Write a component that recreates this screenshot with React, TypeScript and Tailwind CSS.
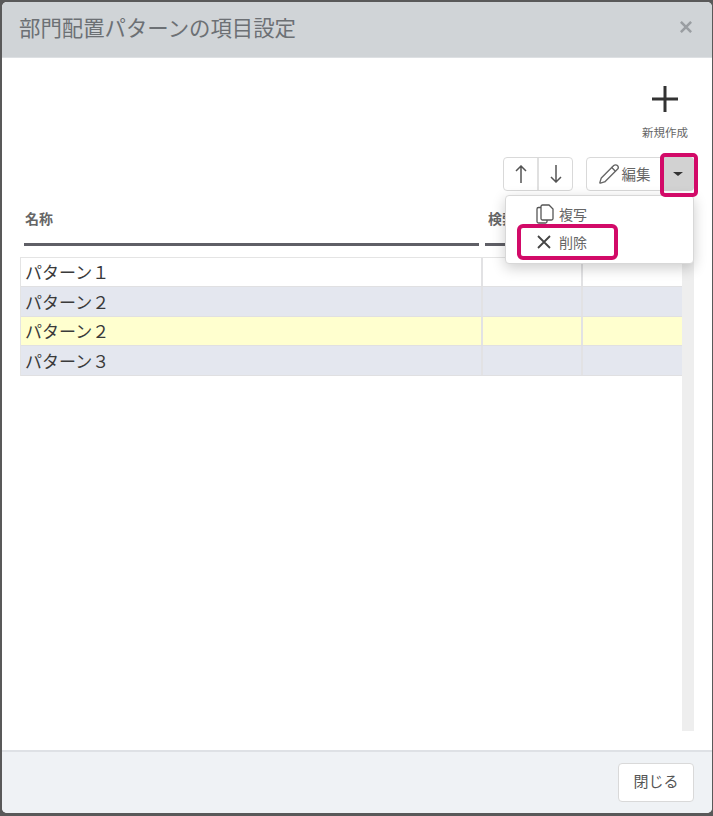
import { Pencil } from "lucide-react";

const font = { fontFamily: '"Noto Sans CJK JP", "Noto Sans", sans-serif' };

const rows = [
  { name: "パターン１", bg: "bg-white", h: "h-[29px]" },
  { name: "パターン２", bg: "bg-[#e4e7ef]", h: "h-[30px]" },
  { name: "パターン２", bg: "bg-[#ffffcf]", h: "h-[29px]" },
  { name: "パターン３", bg: "bg-[#e4e7ef]", h: "h-[30px]" },
];

function PatternTable() {
  return (
    <div className="flex h-[474px]">
      <div className="w-[662px] bg-white">
        <div className="border-t border-l border-[#e4e4e4]">
          {rows.map((row, i) => (
            <div key={i} className={`grid grid-cols-[460px_100px_101px] border-b border-[#e0e0e2] ${row.h} ${row.bg}`}>
              <div className="flex items-center pl-[4px] text-[17px] text-[#3a3a3a]">{row.name}</div>
              <div className="border-l-2 border-[#e2e2e4]" />
              <div className="border-l-2 border-[#e2e2e4]" />
            </div>
          ))}
        </div>
      </div>
      <div className="w-[12px] bg-[#eeeeee]" />
    </div>
  );
}

function CloseMark({ size, width }: { size: number; width: number }) {
  return (
    <svg width={size} height={size} viewBox="0 0 14 14" fill="none" stroke="currentColor" strokeWidth={width}>
      <path d="M1 1l12 12M13 1L1 13" />
    </svg>
  );
}

export default function App() {
  return (
    <div className="h-[816px] bg-[#595959] pt-[2px] pr-[1px] pb-[3px] pl-[2px]" style={font}>
      <div className="flex h-full flex-col overflow-hidden rounded-[5px] bg-white">
        <div className="flex h-[56px] items-center justify-between border-b border-[#dde0e3] bg-[#d0d4d7] pr-[20px] pl-[17px]">
          <h1 className="mb-[4px] text-[21.4px] text-[#6c7074]">部門配置パターンの項目設定</h1>
          <div className="mb-[5px] text-[#9a9ea2]">
            <CloseMark size={12} width={3} />
          </div>
        </div>

        <div className="relative flex flex-1 flex-col pt-[27px] pr-[18px] pb-[19px] pl-[18px]">
          <div className="mr-[3px] flex w-[52px] flex-col items-center self-end">
            <svg width="28" height="28" viewBox="0 0 28 28" className="text-[#333]">
              <path d="M14 1v26M1 14h26" stroke="currentColor" strokeWidth="3" fill="none" />
            </svg>
            <span className="mt-[11px] whitespace-nowrap text-[11.5px] leading-[16px] text-[#666]">新規作成</span>
          </div>

          <div className="mt-[17px] flex justify-end">
            <div className="flex h-[34px] w-[70px] rounded-[4px] border border-[#d9d9d9] bg-white text-[#555]">
              <div className="flex flex-1 items-center justify-center border-r-2 border-[#e0e0e0]">
                <svg width="12" height="18" viewBox="0 0 12 18" fill="none" stroke="currentColor" strokeWidth="1.5">
                  <path d="M6 18V1M1 6l5-5 5 5" />
                </svg>
              </div>
              <div className="flex flex-1 items-center justify-center">
                <svg width="12" height="18" viewBox="0 0 12 18" fill="none" stroke="currentColor" strokeWidth="1.5">
                  <path d="M6 0v17M1 12l5 5 5-5" />
                </svg>
              </div>
            </div>
            <div className="ml-[13px] flex h-[34px] w-[75px] items-center justify-center gap-[2px] rounded-l-[4px] border border-[#d9d9d9] bg-white pl-[1px] text-[#666]">
              <Pencil className="h-[22px] w-[22px]" strokeWidth={1.5} />
              <span className="text-[14.5px]">編集</span>
            </div>
            <div className="flex h-[34px] w-[33px] items-center justify-center rounded-r-[4px] bg-[#d2d2d2]">
              <div className="h-0 w-0 border-x-[5px] border-t-[4px] border-x-transparent border-t-[#333]" />
            </div>
          </div>

          <div className="mt-[17px] ml-[4px] grid h-[38px] grid-cols-[455px_100px] gap-x-[6px] text-[14px] font-bold text-[#666]">
            <div className="border-b-[3px] border-[#5f5f66] pl-[1px] leading-[20px]">名称</div>
            <div className="border-b-[3px] border-[#5f5f66] pl-[3px] leading-[20px]">検索</div>
          </div>

          <div className="mt-[11px]">
            <PatternTable />
          </div>

          <div className="absolute top-[137px] left-[503px] w-[189px] rounded-[4px] border border-[#d8d8d8] bg-white shadow-[0_4px_14px_rgba(0,0,0,0.2)]">
            <div className="flex h-[34px] items-center pt-[2px] pl-[30px] text-[14px] text-[#666]">
              <svg width="18" height="20" viewBox="0 0 18 20" fill="none" stroke="#555" strokeWidth="1.3">
                <path d="M5 3.5H2.5A1.5 1.5 0 0 0 1 5v12.5A1.5 1.5 0 0 0 2.5 19h7a1.5 1.5 0 0 0 1.5-1.5V16" />
                <path d="M6.5 1H13l4 4v9.5a1.5 1.5 0 0 1-1.5 1.5h-9A1.5 1.5 0 0 1 5 14.5v-12A1.5 1.5 0 0 1 6.5 1Z" />
              </svg>
              <span className="ml-[5px]">複写</span>
            </div>
            <div className="flex h-[33px] items-center pb-[9px] pl-[31px] text-[14px] text-[#666]">
              <div className="text-[#444]">
                <CloseMark size={14} width={1.8} />
              </div>
              <span className="ml-[8px]">削除</span>
            </div>
          </div>

          <div className="absolute top-[166px] left-[515px] h-[36px] w-[101px] rounded-[6px] border-[4px] border-[#d20a68]" />
          <div className="absolute top-[95px] left-[658px] h-[44px] w-[38px] rounded-[5px] border-[4px] border-[#d20a68]" />
        </div>

        <div className="flex h-[63px] items-center justify-end border-t-2 border-[#dee1e5] bg-[#eff2f5] pr-[18px]">
          <button className="mb-[1px] h-[39px] w-[76px] rounded-[4px] border border-[#d9d9d9] bg-white pb-[1px] text-[15px] text-[#555]">閉じる</button>
        </div>
      </div>
    </div>
  );
}
